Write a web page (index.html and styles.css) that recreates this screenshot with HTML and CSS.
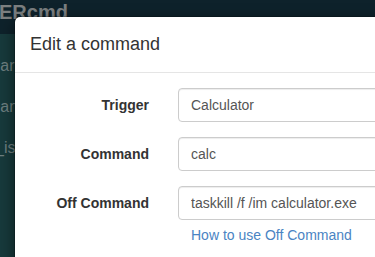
FILE: index.html
```html
<!DOCTYPE html>
<html>
<head>
<meta charset="utf-8">
<link rel="stylesheet" href="styles.css">
</head>
<body>
<div class="page">
  <header class="navbar"><span class="brand">ERcmd</span></header>
  <nav class="side">
    <span class="side-item">mar</span>
    <span class="side-item">man</span>
    <span class="side-item">c_is</span>
  </nav>
</div>
<div class="modal">
  <div class="modal-header"><h4 class="modal-title">Edit a command</h4></div>
  <div class="modal-body">
    <div class="form-row">
      <label class="form-label">Trigger</label>
      <div class="form-field"><input class="form-control" type="text" value="Calculator"></div>
    </div>
    <div class="form-row">
      <label class="form-label">Command</label>
      <div class="form-field"><input class="form-control" type="text" value="calc"></div>
    </div>
    <div class="form-row">
      <label class="form-label">Off Command</label>
      <div class="form-field">
        <input class="form-control" type="text" value="taskkill /f /im calculator.exe">
        <a class="help-link" href="#">How to use Off Command</a>
      </div>
    </div>
  </div>
</div>
</body>
</html>
```
FILE: styles.css
```css
html, body {
  margin: 0;
  padding: 0;
  width: 375px;
  height: 257px;
  overflow: hidden;
  font-family: "Liberation Sans", Arial, sans-serif;
}
body {
  background: #173a3c;
  position: relative;
}
.page {
  display: flex;
  flex-direction: column;
  height: 100%;
}
.navbar {
  height: 34px;
  background: #0e222b;
  display: flex;
  align-items: flex-start;
}
.brand {
  color: #7b7f80;
  font-weight: bold;
  font-size: 20px;
  line-height: 24px;
  margin-left: -1px;
}
.side {
  display: flex;
  flex-direction: column;
  gap: 21px;
  padding-top: 22px;
}
.side-item {
  color: #6f8081;
  font-size: 16px;
  line-height: 20px;
  margin-left: -13px;
}
.modal {
  position: absolute;
  left: 14px;
  top: 16px;
  width: 600px;
  height: 400px;
  background: #fff;
  border: 1px solid rgba(0,0,0,.2);
  border-radius: 6px;
  box-shadow: 0 5px 15px rgba(0,0,0,.5);
  box-sizing: border-box;
  background-clip: padding-box;
}
.modal-header {
  padding: 15px 15px 14px;
  border-bottom: 1px solid #e5e5e5;
}
.modal-title {
  margin: 0;
  font-size: 18px;
  line-height: 25.7px;
  font-weight: 500;
  color: #333;
}
.modal-body {
  padding: 15px 14px;
}
.form-row {
  display: flex;
  margin-bottom: 15px;
}
.form-label {
  width: 120px;
  flex: none;
  text-align: right;
  padding-top: 7px;
  font-size: 14px;
  line-height: 20px;
  font-weight: bold;
  color: #333;
  margin-right: 29px;
}
.form-field {
  flex: 1;
  display: flex;
  flex-direction: column;
}
.form-control {
  height: 34px;
  box-sizing: border-box;
  padding: 6px 12px;
  font-family: inherit;
  font-size: 14px;
  line-height: 20px;
  color: #555;
  border: 1px solid #ccc;
  border-radius: 4px;
  box-shadow: inset 0 1px 1px rgba(0,0,0,.075);
  width: 100%;
  margin: 0;
}
.help-link {
  margin-top: 5px;
  font-size: 14px;
  line-height: 20px;
  color: #4a84c3;
  text-decoration: none;
  padding-left: 13px;
}
```
